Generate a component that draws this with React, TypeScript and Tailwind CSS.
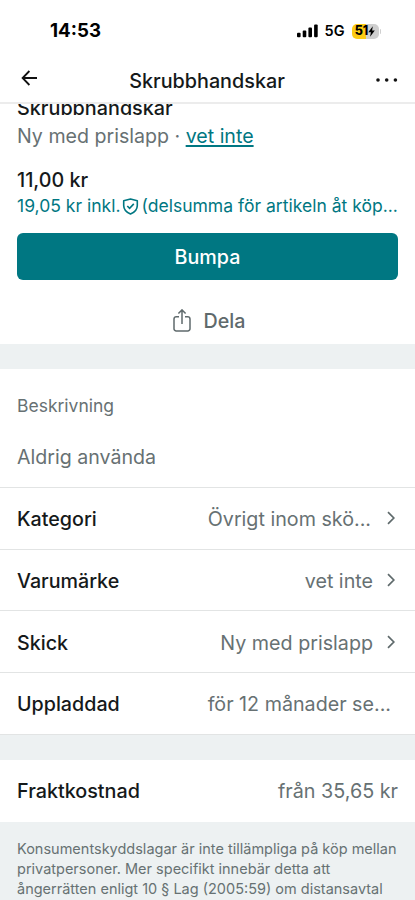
import React from 'react';

type Detail = {
  label: string;
  value: string;
  link: boolean;
  truncated?: boolean;
};

const details: Detail[] = [
  { label: 'Kategori', value: 'Övrigt inom skö...', link: true, truncated: true },
  { label: 'Varumärke', value: 'vet inte', link: true },
  { label: 'Skick', value: 'Ny med prislapp', link: true },
  { label: 'Uppladdad', value: 'för 12 månader se...', link: false },
];

const StatusBar = () => (
  <div className="flex h-[58px] shrink-0 items-center justify-between pl-[50px] pr-[34px] pt-[4px] text-black">
    <span className="text-[18.7px] leading-6 font-bold">14:53</span>
    <div className="flex items-center">
      <svg width="21" height="14" viewBox="0 0 21 14" fill="#000">
        <rect x="0" y="8.8" width="3.6" height="4.4" rx="1" />
        <rect x="5.7" y="6.4" width="3.6" height="6.8" rx="1" />
        <rect x="11.4" y="3.6" width="3.6" height="9.6" rx="1" />
        <rect x="17.1" y="0.6" width="3.6" height="12.6" rx="1" />
      </svg>
      <span className="ml-[7px] text-[14.5px] leading-5 font-semibold">5G</span>
      <div className="ml-[7px] flex h-[15px] w-[27px] items-center justify-center rounded-[5px] bg-linear-to-r from-[#fccb14] from-52% to-[#cfcfcf] to-52%">
        <span className="text-[12.5px] leading-none font-extrabold">51</span>
        <svg width="7" height="11" viewBox="0 0 7 11" fill="#000">
          <path d="M4.8 0.2 0.3 6.3h2.6l-0.8 4.5L6.8 4.5H4.1z" />
        </svg>
      </div>
      <div className="ml-px h-[5px] w-[1.5px] rounded-r bg-[#cfcfcf]" />
    </div>
  </div>
);

const Header = () => (
  <header className="flex h-[46px] shrink-0 items-center justify-between border-b-2 border-[#ececec] pl-[21px] pr-[17px]">
    <svg width="17" height="16" viewBox="0 0 17 16" fill="none" stroke="#111" strokeWidth="1.8" className="mb-[5px]">
      <path d="M8.4 1 1.6 8l6.8 7M1.6 8H16" />
    </svg>
    <h1 className="pt-px text-[19.8px] leading-6 font-medium text-[#15191a]">Skrubbhandskar</h1>
    <svg width="22" height="4" viewBox="0 0 22 4" fill="#111">
      <circle cx="2" cy="2" r="1.8" />
      <circle cx="10.7" cy="2" r="1.8" />
      <circle cx="19.4" cy="2" r="1.8" />
    </svg>
  </header>
);

const Summary = () => (
  <section className="flex h-[239.5px] shrink-0 flex-col overflow-hidden px-[17px]">
    <div className="-mt-[9px] text-[19.8px] leading-[26px] font-medium text-[#15191a]">Skrubbhandskar</div>
    <div className="mt-px text-[19.6px] leading-[28px] whitespace-nowrap">
      Ny med prislapp · <a className="text-[#007782] underline decoration-[1.5px] underline-offset-[2px]">vet inte</a>
    </div>
    <div className="mt-[17px] text-[19.7px] leading-[26px] font-medium text-[#15191a]">11,00 kr</div>
    <div className="flex items-center pt-px text-[17.55px] leading-[24px] whitespace-nowrap text-[#007782]">
      <span>19,05 kr inkl.</span>
      <svg width="17" height="17" viewBox="0 0 17 17" fill="none" stroke="#007782" strokeWidth="1.6" className="ml-[2px] mr-[2px] shrink-0">
        <path d="M8.5 1 15.3 2.8V7.4c0 4-2.4 6.7-6.8 8.6-4.4-1.9-6.8-4.6-6.8-8.6V2.8z" strokeLinejoin="round" />
        <path d="m5.3 8 2.3 2.4 4.2-4.5" />
      </svg>
      <span>(delsumma för artikeln åt köp...</span>
    </div>
    <button className="mt-[15px] h-[47px] shrink-0 rounded-[6px] bg-[#007782] pt-[2px] text-[19.7px] font-medium text-white">Bumpa</button>
    <button className="mt-[28px] flex items-center justify-center gap-[13px] pl-[3px] text-[19.7px] leading-[26px] font-medium text-[#5f6a6c]">
      <svg width="18" height="24" viewBox="0 0 18 24" fill="none" stroke="#5f6a6c" strokeWidth="1.5">
        <path d="M6 7.7H3.2A2.2 2.2 0 0 0 1 9.9v9.8a2.2 2.2 0 0 0 2.2 2.2h11.6a2.2 2.2 0 0 0 2.2-2.2V9.9a2.2 2.2 0 0 0-2.2-2.2H12" />
        <path d="M9 15V1.1M5.4 4.5 9 0.9l3.6 3.6" />
      </svg>
      Dela
    </button>
  </section>
);

const DetailRow = ({ label, value, link, truncated }: Detail) => (
  <div className="flex h-[61.6px] shrink-0 items-center border-b border-[#e2e4e4] pl-[17px] pr-[19px] text-[19.7px] leading-7">
    <span className="flex-1 pt-[2px] font-medium text-[#15191a]">{label}</span>
    <span className={truncated ? 'mr-[16px] pt-[2px]' : link ? 'mr-[14px] pt-[2px]' : 'mr-[5px] pt-[2px]'}>{value}</span>
    {link && (
      <svg width="9" height="14" viewBox="0 0 9 14" fill="none" stroke="#5f6a6c" strokeWidth="1.7">
        <path d="m1 1.2 5.8 5.8L1 12.8" />
      </svg>
    )}
  </div>
);

const App = () => {
  return (
    <main className="flex h-[900px] w-[415px] flex-col overflow-hidden bg-white font-[Inter,sans-serif] text-[#677173]">
      <StatusBar />
      <Header />
      <Summary />
      <div className="h-[25px] shrink-0 bg-[#edf1f2]" />
      <section className="flex h-[119.7px] shrink-0 flex-col border-b border-[#e2e4e4] px-[17px] pt-[25.5px]">
        <h2 className="text-[17.5px] leading-6">Beskrivning</h2>
        <p className="mt-[25px] text-[19.6px] leading-[28px]">Aldrig använda</p>
      </section>
      {details.map((detail) => (
        <DetailRow key={detail.label} {...detail} />
      ))}
      <div className="h-[25px] shrink-0 bg-[#edf1f2]" />
      <div className="flex h-[62px] shrink-0 items-center justify-between px-[17px] pt-[2px] text-[19.75px]">
        <span className="font-medium text-[#15191a]">Fraktkostnad</span>
        <span>från 35,65 kr</span>
      </div>
      <p className="flex-1 bg-[#edf1f2] px-[17px] pt-[17px] text-[14.5px] leading-[20px] whitespace-nowrap">
        Konsumentskyddslagar är inte tillämpliga på köp mellan
        <br />
        privatpersoner. Mer specifikt innebär detta att
        <br />
        ångerrätten enligt 10 § Lag (2005:59) om distansavtal
      </p>
    </main>
  );
};

export default App;
